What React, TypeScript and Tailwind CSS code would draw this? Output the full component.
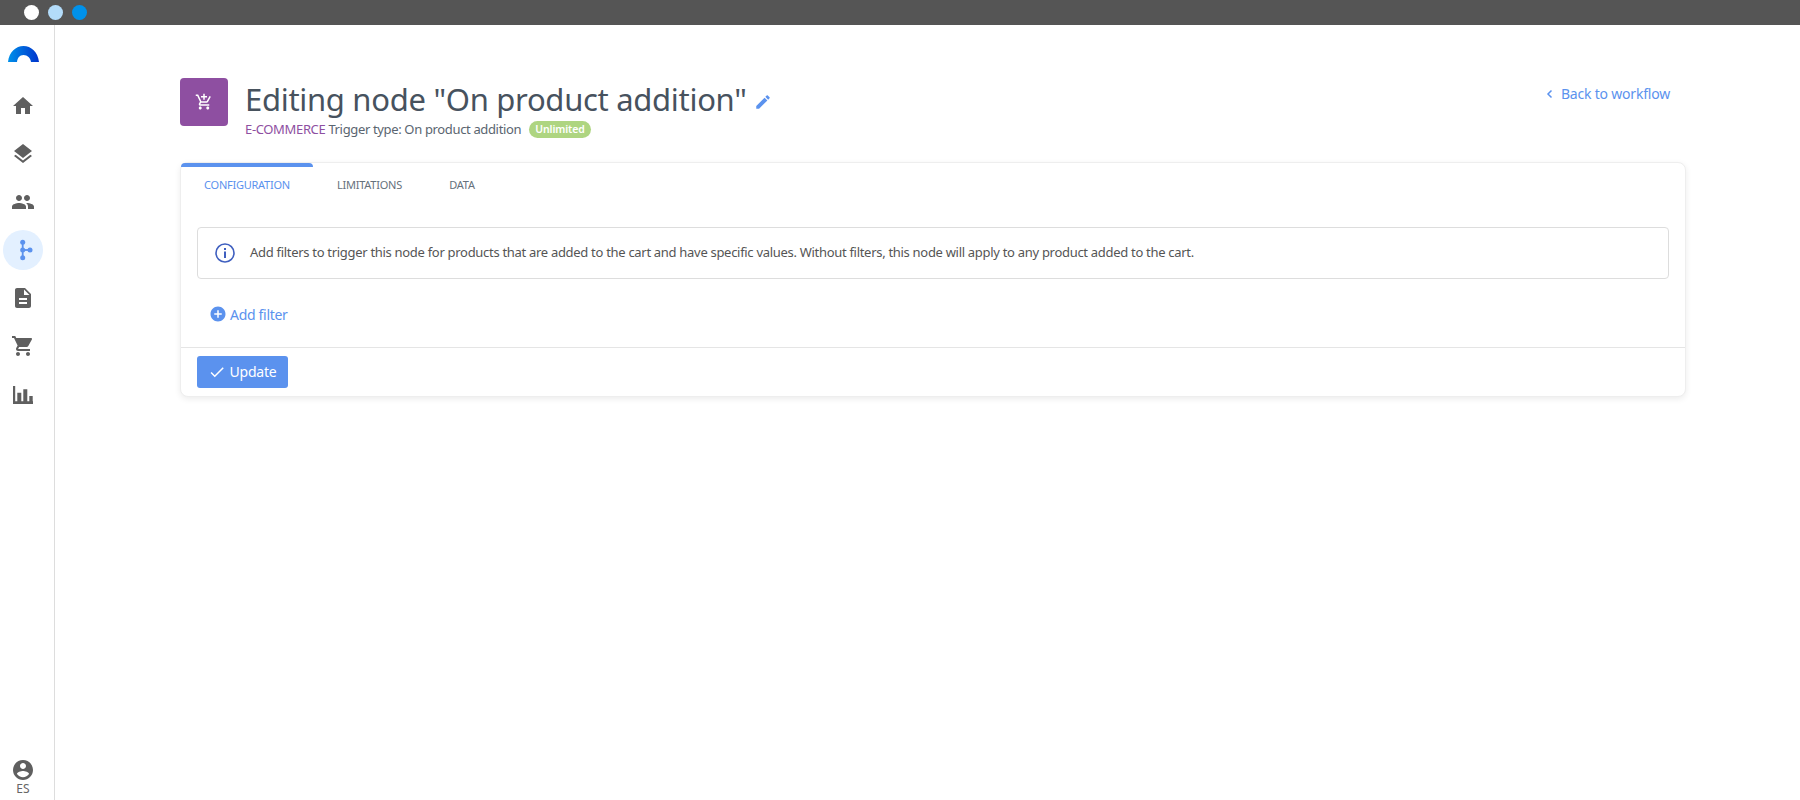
const navIcons = [
  "M10 20v-6h4v6h5v-8h3L12 3 2 12h3v8z",
  "M11.99 18.54l-7.37-5.73L3 14.07l9 7 9-7-1.63-1.27-7.38 5.74zM12 16l7.36-5.73L21 9l-9-7-9 7 1.63 1.27L12 16z",
  "M16 11c1.66 0 2.99-1.34 2.99-3S17.66 5 16 5c-1.66 0-3 1.34-3 3s1.34 3 3 3zm-8 0c1.66 0 2.99-1.34 2.99-3S9.66 5 8 5C6.34 5 5 6.34 5 8s1.34 3 3 3zm0 2c-2.33 0-7 1.17-7 3.5V19h14v-2.5c0-2.33-4.67-3.5-7-3.5zm8 0c-.29 0-.62.02-.97.05 1.16.84 1.97 1.97 1.97 3.45V19h6v-2.5c0-2.33-4.67-3.5-7-3.5z",
  "workflow",
  "M14 2H6c-1.1 0-1.99.9-1.99 2L4 20c0 1.1.89 2 1.99 2H18c1.1 0 2-.9 2-2V8l-6-6zm2 16H8v-2h8v2zm0-4H8v-2h8v2zm-3-5V3.5L18.5 9H13z",
  "M7 18c-1.1 0-1.99.9-1.99 2S5.9 22 7 22s2-.9 2-2-.9-2-2-2zM1 2v2h2l3.6 7.59-1.35 2.45c-.16.28-.25.61-.25.96 0 1.1.9 2 2 2h12v-2H7.42c-.14 0-.25-.11-.25-.25l.03-.12.9-1.63h7.45c.75 0 1.41-.41 1.75-1.03l3.58-6.49c.08-.14.12-.31.12-.48 0-.55-.45-1-1-1H5.21l-.94-2H1zm16 16c-1.1 0-1.99.9-1.99 2s.89 2 1.99 2 2-.9 2-2-.9-2-2-2z",
  "M2 4h2.200v15.300H22V22H2zM6.300 10.700h4v8.600h-4zM12.300 7.300h4v12h-4zM18.300 14h3.400v5.300h-3.400z",
];

function Icon({ d, className }: { d: string; className: string }) {
  return (
    <svg viewBox="0 0 24 24" fill="currentColor" className={className}>
      <path d={d} />
    </svg>
  );
}

function NavItem({ d }: { d: string }) {
  if (d === "workflow") {
    return (
      <div className="flex h-10 w-10 items-center justify-center rounded-full bg-[#e3f0ff]">
        <svg viewBox="0 0 24 24" className="h-6 w-6 text-[#5b92ee]" fill="currentColor">
          <rect x="10.800" y="4.300" width="1.800" height="15.400" />
          <rect x="11.700" y="11.100" width="7.300" height="1.800" />
          <circle cx="11.700" cy="4.300" r="2.500" />
          <circle cx="11.700" cy="12" r="2.500" />
          <circle cx="11.700" cy="19.700" r="2.500" />
          <circle cx="19" cy="12" r="2.500" />
        </svg>
      </div>
    );
  }
  return (
    <div className="flex h-10 w-10 items-center justify-center">
      <Icon d={d} className="h-6 w-6 text-[#5f5f5f]" />
    </div>
  );
}

export default function App() {
  return (
    <div className="flex h-screen flex-col overflow-hidden bg-white font-['Noto_Sans',sans-serif] text-[#4d4d4d]">
      <div className="flex h-[25px] shrink-0 items-center gap-[9px] bg-[#555555] pl-[24px]">
        <span className="h-[15px] w-[15px] rounded-full bg-white" />
        <span className="h-[15px] w-[15px] rounded-full bg-[#b3dcfa]" />
        <span className="h-[15px] w-[15px] rounded-full bg-[#0091ea]" />
      </div>

      <div className="flex min-h-0 flex-1">
        <aside className="flex w-[55px] shrink-0 flex-col items-center border-r border-[#dddddd] pr-[8px]">
          <svg viewBox="0 0 31 16" className="mt-[21px] h-[16px] w-[31px]">
            <defs>
              <linearGradient id="logo" x1="0" x2="1" y1="0" y2="0">
                <stop offset="0" stopColor="#0091ea" />
                <stop offset="1" stopColor="#0033cc" />
              </linearGradient>
            </defs>
            <path d="M0 16C1 6 8 0 15.500 0S30 6 31 16h-8c-.5-4-3.500-7-7.500-7s-6 3-6.500 7z" fill="url(#logo)" />
          </svg>
          <nav className="mt-[24px] flex flex-col gap-[8px]">
            {navIcons.map((d, i) => (
              <NavItem key={i} d={d} />
            ))}
          </nav>
          <div className="mt-auto mb-[4px] flex flex-col items-center">
            <Icon
              d="M12 2C6.48 2 2 6.48 2 12s4.480 10 10 10 10-4.480 10-10S17.520 2 12 2zm0 3c1.660 0 3 1.340 3 3s-1.340 3-3 3-3-1.340-3-3 1.340-3 3-3zm0 14.200c-2.500 0-4.710-1.280-6-3.220.03-1.990 4-3.080 6-3.080 1.990 0 5.970 1.090 6 3.080-1.290 1.940-3.500 3.220-6 3.220z"
              className="h-6 w-6 text-[#5f5f5f]"
            />
            <span className="text-[12px] leading-[14px] text-[#666666]">ES</span>
          </div>
        </aside>

        <main className="min-w-0 flex-1 pt-[53px] pl-[125px] pr-[114px]">
          <div className="flex items-start pr-[16px]">
            <div className="flex h-[48px] w-[48px] items-center justify-center rounded-[4px] bg-[#8e4fa1]">
              <Icon
                d="M11 9h2V6h3V4h-3V1h-2v3H8v2h3v3zm-4 9c-1.100 0-1.990.9-1.990 2S5.900 22 7 22s2-.9 2-2-.9-2-2-2zm10 0c-1.100 0-1.990.9-1.990 2s.89 2 1.990 2 2-.9 2-2-.9-2-2-2zm-9.830-3.250l.03-.12.9-1.630h7.450c.75 0 1.410-.41 1.750-1.030l3.860-7.010L19.420 4h-.01l-1.100 2-2.760 5H8.530l-.13-.27L6.160 6l-.95-2-.94-2H1v2h2l3.600 7.590-1.350 2.450c-.16.28-.25.61-.25.96 0 1.100.9 2 2 2h12v-2H7.420c-.13 0-.25-.11-.25-.25z"
                className="h-[18px] w-[18px] text-white"
              />
            </div>
            <div className="ml-[17px] flex-1">
              <div className="flex items-center">
                <h1 className="text-[31px] leading-[42px] tracking-[-0.3px] text-[#47525e]">
                  Editing node "On product addition"
                </h1>
                <Icon
                  d="M3 17.250V21h3.750L17.810 9.940l-3.750-3.750L3 17.250zM20.710 7.040c.39-.39.39-1.020 0-1.410l-2.340-2.340c-.39-.39-1.020-.39-1.410 0l-1.830 1.830 3.750 3.750 1.830-1.830z"
                  className="ml-[7px] mt-[6px] h-[18px] w-[18px] text-[#5b92ee]"
                />
              </div>
              <div className="mt-[-1px] flex items-center text-[13px] leading-[20px] tracking-[-0.35px] text-[#5a6570]">
                <span className="text-[#8e4fa1]">E-COMMERCE</span>
                <span className="ml-[3px]">Trigger type: On product addition</span>
                <span className="ml-[8px] rounded-full bg-[#aed581] px-[6px] text-[10.500px] font-semibold leading-[17px] tracking-[-0.1px] text-white">
                  Unlimited
                </span>
              </div>
            </div>
            <a className="mt-[6px] flex items-center text-[14px] leading-[20px] tracking-[-0.2px] text-[#5b92ee]">
              <svg viewBox="0 0 10 10" className="mr-[6px] h-[10px] w-[10px]" fill="none" stroke="currentColor" strokeWidth="1.500">
                <path d="M6.500 1.500 3 5l3.500 3.500" />
              </svg>
              Back to workflow
            </a>
          </div>

          <section className="mt-[23px] rounded-[8px] border border-[#eeeeee] bg-white shadow-[0_2px_6px_rgba(0,0,0,0.08)]">
            <div className="flex h-[43px] text-[11px] uppercase tracking-[-0.25px]">
              <div className="flex w-[132px] items-center justify-center rounded-t-[4px] border-t-[4px] border-[#5b92ee] pb-[3px] text-[#5b92ee]">
                Configuration
              </div>
              <div className="flex w-[113px] items-center justify-center pt-[1px] text-[#66717c]">Limitations</div>
              <div className="flex w-[72px] items-center justify-center pt-[1px] text-[#66717c]">Data</div>
            </div>

            <div className="px-[16px] pt-[21px]">
              <div className="flex h-[52px] items-center rounded-[4px] border border-[#dddddd] pl-[17px] text-[13px] tracking-[-0.3px] text-[#555555]">
                <svg viewBox="0 0 20 20" className="mr-[15px] h-5 w-5 shrink-0 text-[#3f5fbf]" fill="none" stroke="currentColor">
                  <circle cx="10" cy="10" r="9" strokeWidth="1.600" />
                  <path d="M10 8.500V15" strokeWidth="2" />
                  <path d="M10 5v2" strokeWidth="2" />
                </svg>
                Add filters to trigger this node for products that are added to the cart and have specific values. Without filters, this node will apply to any product added to the cart.
              </div>
              <div className="flex h-[68px] items-center pt-[2px] pl-[12px] text-[14px] tracking-[-0.3px] text-[#5b92ee]">
                <Icon
                  d="M12 2C6.480 2 2 6.480 2 12s4.480 10 10 10 10-4.480 10-10S17.520 2 12 2zm5 11h-4v4h-2v-4H7v-2h4V7h2v4h4v2z"
                  className="mr-[3px] h-[18px] w-[18px]"
                />
                Add filter
              </div>
            </div>

            <div className="border-t border-[#e5e5e5] px-[16px] py-[8px]">
              <button className="flex h-[32px] w-[91px] items-center justify-center rounded-[3px] bg-[#5b92ee] pb-[1px] text-[14px] tracking-[-0.2px] text-white">
                <Icon
                  d="M9 16.170L4.830 12l-1.420 1.410L9 19 21 7l-1.410-1.410z"
                  className="mr-[3px] h-[18px] w-[18px]"
                />
                Update
              </button>
            </div>
          </section>
        </main>
      </div>
    </div>
  );
}
